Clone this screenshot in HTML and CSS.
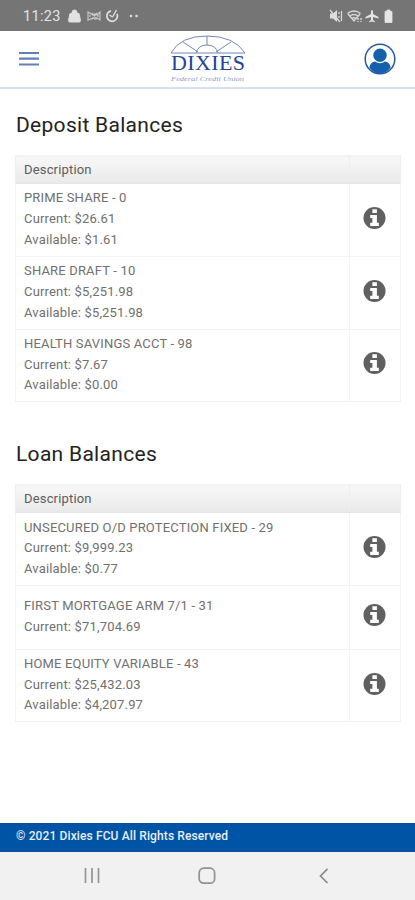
FILE: index.html
```html
<!DOCTYPE html>
<html lang="en">
  <head>
    <meta charset="utf-8">
    <title>Dixies Federal Credit Union</title>
    <link rel="stylesheet" href="styles.css">
  </head>
  <body>
    <svg class="symbols">
      <symbol id="info" viewBox="0 0 24 24">
        <circle cx="12" cy="12" r="11.5" fill="#606060" />
        <path d="M9.800 2.800h4.700v4H9.800zM7.500 8.800h7v8.200h2v3.400h-9V17h2.300v-5H7.500z" fill="#fff" />
      </symbol>
    </svg>

    <div class="status-bar">
      <span class="time">11:23</span>
      <svg class="status-left" viewBox="0 0 74 16" width="74" height="16">
        <path d="M2 5.500h9l1.500 7q0 1.500-1.500 1.500H2q-1.500 0-1.500-1.500zM4 6V4.500a2.500 2.500 0 0 1 5 0V6" fill="#e2e2e2" stroke="#e2e2e2" stroke-width="1" />
        <path d="M20 4l5 3 2-1 2 1 3-3v8l-3-2-2 1-2-1-5 2zM22 7v2M30 7v2M24 5l5 6M29 5l-5 6" fill="none" stroke="#c7c7c7" stroke-width="1.2" />
        <path d="M43 2.800a5.300 5.300 0 1 0 6 3" fill="none" stroke="#e0e0e0" stroke-width="1.700" />
        <path d="M44.500 9l4-7M44.500 9l-3-2" fill="none" stroke="#e0e0e0" stroke-width="1.400" />
        <circle cx="63" cy="8" r="1.300" fill="#ddd" />
        <circle cx="68.500" cy="8" r="1.300" fill="#ddd" />
      </svg>
      <svg class="status-right" viewBox="0 0 66 16" width="66" height="16">
        <path d="M1 5.500h3l4-3.500v12l-4-3.500H1z" fill="#ddd" />
        <path d="M1 2l10 12M10 4v2M12.500 3v10M10 8v2" stroke="#ddd" stroke-width="1.200" />
        <g fill="none" stroke="#d8d8d8" stroke-width="1.400">
          <path d="M18.500 5.500q6.500-5 13 0M21 8q4-3 8 0M23 10.500q2-1.500 4 0M19 6l6 7 6-7" />
          <path d="M29 10v4M32 10v4" stroke-dasharray="2 1" />
        </g>
        <path d="M43 2q1 0 1 1.500V6l5.500 3v1.500L44 9v3l1.800 1.300v1L43 13.500l-2.800.8v-1L42 12V9l-5.500 1.500V9L42 6V3.500Q42 2 43 2z" fill="#e6e6e6" />
        <path d="M56 3.500h2V2h3v1.500h2v11h-7z" fill="#e6e6e6" stroke="#e6e6e6" stroke-width=".8" />
      </svg>
    </div>

    <div class="header">
      <svg class="menu" viewBox="0 0 20 16" width="20" height="16">
        <path d="M0 2h20M0 7.700h20M0 13.500h20" stroke="#617fb9" stroke-width="2.200" />
      </svg>
      <svg class="logo" viewBox="0 0 84 50" width="84" height="50">
        <path d="M5 19Q14 2 41 2T79 19M5 19h74M30 19q2-8 11-8T52 19M41 2v9M17 8l15 10M65 8L50 18" fill="none" stroke="#7187bd" stroke-width="1" />
        <text x="5" y="36" textLength="74" lengthAdjust="spacing" class="logo-name">DIXIES</text>
        <text x="5" y="46.500" textLength="73" lengthAdjust="spacingAndGlyphs" class="logo-sub">Federal Credit Union</text>
      </svg>
      <svg class="profile" viewBox="0 0 32 32" width="32" height="32">
        <circle cx="16" cy="16" r="14.800" fill="#fff" stroke="#2458a0" stroke-width="1.500" />
        <circle cx="16" cy="12.300" r="6.700" fill="#1560ab" />
        <path d="M5.300 24.500Q6.500 19 11 18.500q5 3.500 10 0 4.500.5 5.700 6Q22.500 30.400 16 30.500T5.300 24.500z" fill="#1560ab" />
      </svg>
    </div>

    <div class="content">
      <h1>Deposit Balances</h1>
      <table>
        <tr>
          <th>Description</th>
          <th class="action"></th>
        </tr>
        <tr>
          <td>PRIME SHARE - 0<br>Current: $26.61<br>Available: $1.61</td>
          <td class="action"><svg class="info"><use href="#info" /></svg></td>
        </tr>
        <tr>
          <td>SHARE DRAFT - 10<br>Current: $5,251.98<br>Available: $5,251.98</td>
          <td class="action"><svg class="info"><use href="#info" /></svg></td>
        </tr>
        <tr>
          <td>HEALTH SAVINGS ACCT - 98<br>Current: $7.67<br>Available: $0.00</td>
          <td class="action"><svg class="info"><use href="#info" /></svg></td>
        </tr>
      </table>

      <h1>Loan Balances</h1>
      <table>
        <tr>
          <th>Description</th>
          <th class="action"></th>
        </tr>
        <tr>
          <td>UNSECURED O/D PROTECTION FIXED - 29<br>Current: $9,999.23<br>Available: $0.77</td>
          <td class="action"><svg class="info"><use href="#info" /></svg></td>
        </tr>
        <tr class="short">
          <td>FIRST MORTGAGE ARM 7/1 - 31<br>Current: $71,704.69</td>
          <td class="action"><svg class="info"><use href="#info" /></svg></td>
        </tr>
        <tr>
          <td>HOME EQUITY VARIABLE - 43<br>Current: $25,432.03<br>Available: $4,207.97</td>
          <td class="action"><svg class="info"><use href="#info" /></svg></td>
        </tr>
      </table>
    </div>

    <div class="footer">© 2021 Dixies FCU All Rights Reserved</div>

    <div class="nav-bar">
      <svg viewBox="0 0 16 16" width="16" height="16">
        <path d="M1.500 0v15M8 0v15M14.500 0v15" stroke="#949494" stroke-width="1.700" />
      </svg>
      <svg class="home" viewBox="0 0 18 18" width="18" height="18">
        <rect x="1.200" y="1.200" width="15.400" height="15" rx="4.500" fill="none" stroke="#929292" stroke-width="1.700" />
      </svg>
      <svg viewBox="0 0 10 16" width="10" height="16">
        <path d="M8.500 .8L1.500 8l7 7" fill="none" stroke="#8b8b8b" stroke-width="1.700" />
      </svg>
    </div>
  </body>
</html>
```
FILE: styles.css
```css
body {
  font-family: Roboto, "Liberation Sans", sans-serif;
  background-color: #fff;
  color: #707070;
  margin: 0;
  height: 900px;
  display: flex;
  flex-direction: column;
  overflow: hidden;
}

svg {
  display: block;
}

.symbols {
  display: none;
}

.status-bar {
  display: flex;
  align-items: center;
  box-sizing: border-box;
  height: 31px;
  padding: 1px 20px 0 23px;
  background-color: #757575;
  color: #e4e4e4;
}

.time {
  width: 45px;
  font-size: 14.5px;
  letter-spacing: 0.3px;
}

.status-right {
  margin-left: auto;
}

.header {
  display: flex;
  align-items: center;
  justify-content: space-between;
  box-sizing: border-box;
  height: 58px;
  padding: 0 19px;
  border-bottom: 2px solid #d7e0f2;
}

.logo {
  margin-left: 13px;
}

.logo-name {
  font-family: "Liberation Serif", serif;
  font-size: 22px;
  fill: #254491;
}

.logo-sub {
  font-family: "Liberation Serif", serif;
  font-size: 6.5px;
  font-style: italic;
  fill: #8c9ecb;
}

.content {
  flex: 1;
  padding: 0 14px 0 15px;
}

h1 {
  margin: 0;
  padding: 23px 0 0 1px;
  height: 43px;
  font-size: 21px;
  font-weight: normal;
  line-height: 26px;
  letter-spacing: 0.3px;
  color: #222;
}

table {
  width: 386px;
  table-layout: fixed;
  border-collapse: collapse;
  font-size: 13px;
  line-height: 20.8px;
  letter-spacing: 0.17px;
}

table + h1 {
  padding-top: 39px;
}

th,
td {
  box-sizing: border-box;
  padding: 0 8px;
  border: 1px solid #f3f3f3;
  text-align: left;
  vertical-align: middle;
}

th {
  height: 28px;
  padding-top: 1px;
  background: linear-gradient(#f8f8f8, #e9e9e9);
  border-color: #f4f4f4 #eee #e6e6e6;
  font-weight: normal;
  color: #5c5c5c;
}

td {
  height: 72.8px;
  padding-bottom: 1px;
}

.short td {
  height: 63.5px;
}

.action {
  width: 51px;
  padding: 0 13px 4px;
}

.info {
  width: 23px;
  height: 24px;
}

.footer {
  box-sizing: border-box;
  height: 29px;
  padding-left: 16px;
  background-color: #0054a6;
  border-top: 1px solid #174a94;
  border-bottom: 1px solid #174a94;
  color: #e8eef7;
  font-size: 12px;
  font-weight: 500;
  line-height: 24px;
  letter-spacing: 0.12px;
}

.nav-bar {
  display: flex;
  align-items: center;
  justify-content: space-between;
  box-sizing: border-box;
  height: 48px;
  padding: 0 86px 0 84px;
  background-color: #f1f1f1;
}

.home {
  margin-right: 5px;
}
```
